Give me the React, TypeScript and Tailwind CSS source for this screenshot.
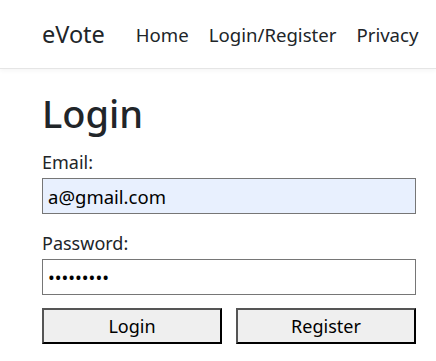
import { useState } from "react";

function NavBar() {
  return (
    <header className="flex h-[69px] items-center border-b border-[#e5e5e5] bg-white pl-[42px] shadow-[0_2px_4px_rgba(0,0,0,0.04)]">
      <a className="pt-[2px] text-[23.5px] text-[#212529]" href="#">
        eVote
      </a>
      <nav className="ml-[31px] flex gap-[20px] pt-[2px] text-[18.6px] text-[#212529]">
        <a href="#">Home</a>
        <a href="#">Login/Register</a>
        <a href="#">Privacy</a>
      </nav>
    </header>
  );
}

export default function App() {
  const [email, setEmail] = useState("a@gmail.com");
  const [password, setPassword] = useState("123456789");

  return (
    <div className="min-h-screen bg-white font-['Noto_Sans',sans-serif] text-[#212529]">
      <NavBar />
      <main className="pl-[42px] pr-[20px]">
        <h1 className="mt-[20px] text-[38px] leading-[48px] font-medium">Login</h1>
        <form className="mt-[12px] flex flex-col" onSubmit={(e) => e.preventDefault()}>
          <label className="text-[18px] leading-[26px]">Email:</label>
          <input
            className="mt-[3px] h-[36px] w-full border border-[#767676] bg-[#e8f0fe] px-[5px] text-[18.5px] text-black outline-none"
            value={email}
            onChange={(e) => setEmail(e.target.value)}
          />
          <label className="mt-[16px] text-[18px] leading-[26px]">Password:</label>
          <input
            type="password"
            className="mt-[3px] h-[36px] w-full border border-[#767676] bg-white px-[5px] text-[18px] text-black outline-none"
            value={password}
            onChange={(e) => setPassword(e.target.value)}
          />
          <div className="mt-[13px] flex gap-[14px]">
            <button className="h-[36px] flex-1 border-2 border-t-[#555] border-r-black border-b-black border-l-[#555] bg-[#efefef] text-[18px] text-black">
              Login
            </button>
            <button className="h-[36px] flex-1 border-2 border-t-[#555] border-r-black border-b-black border-l-[#555] bg-[#efefef] text-[18px] text-black">
              Register
            </button>
          </div>
        </form>
      </main>
    </div>
  );
}
